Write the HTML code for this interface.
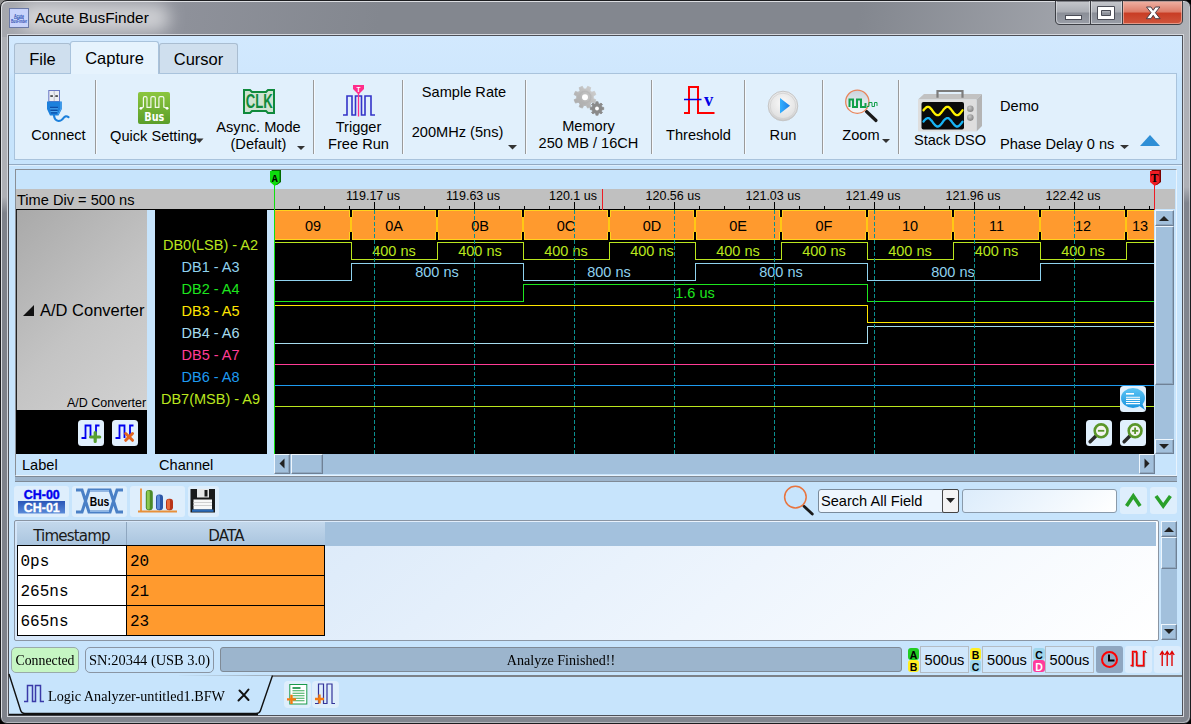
<!DOCTYPE html>
<html><head><meta charset="utf-8"><title>Acute BusFinder</title>
<style>
*{box-sizing:border-box;margin:0;padding:0}
html,body{width:1191px;height:724px;overflow:hidden;background:linear-gradient(135deg,#8c8c8c 0,#8c8c8c 3%,#000 6%,#000 100%)}
body{position:relative;font-family:"Liberation Sans",sans-serif;font-size:15px;color:#000}
.a{position:absolute}
.t{position:absolute;white-space:nowrap;line-height:1}
.c{text-align:center}
#frame{left:0;top:0;width:1191px;height:724px;border:1px solid #1c1d20;border-radius:7px 7px 7px 7px;
 background:linear-gradient(100deg,#a6a8ae 0,#8f929b 14%,#83878f 32%,#83878f 72%,#a4a7ae 92%,#aeb1b7 100%) 0 0/100% 36px no-repeat,
 linear-gradient(#aeb0b6 0,#aeb0b6 160px,#7e828b 176px,#7e828b 100%) 0 36px/9px 100% no-repeat,
 linear-gradient(#aeb0b6 0,#aeb0b6 150px,#80848d 166px,#80848d 100%) 100% 36px/9px 100% no-repeat,
 #82868f;box-shadow:inset 1px 1px 0 0 #dcdee2, inset -1px -1px 0 0 rgba(220,222,226,.55)}
#client{left:8px;top:35px;width:1175px;height:681px;background:linear-gradient(#d2e9fe 0,#cfe7fd 36px,#c7e4fc 44px,#c7e4fc 100%);border:1px solid #4d5058;box-shadow:0 0 0 1px #d4d7dd}
.sep{position:absolute;width:1px;top:80px;height:74px;background:#9a9a9a;box-shadow:1px 0 0 #f4f9fe}
.tab{position:absolute;border:1px solid #a9bdd1;border-bottom:none;border-radius:3px 3px 0 0;background:#cfdfee;font-size:16.5px;text-align:center}
.rl{position:absolute;white-space:nowrap;line-height:1;font-size:14.6px;text-align:center;transform:translateX(-50%)}
.chl{position:absolute;white-space:nowrap;line-height:1;font-size:14.5px;text-align:center;left:154px;width:113px}
.wt{font-family:"Liberation Sans",sans-serif;font-size:15px}
</style></head><body>
<div id="frame" class="a"></div>
<!-- title glow + text -->
<div class="a" style="left:20px;top:4px;width:150px;height:28px;border-radius:14px;background:#fff;opacity:.55;filter:blur(8px)"></div>
<div class="a" style="left:9px;top:8px;width:20px;height:20px;background:#c8d3fb;border:1px solid #6a79a6"></div>
<svg class="a" style="left:9px;top:8px" width="20" height="20"><text x="10" y="9.500" font-size="5" font-weight="bold" fill="#2a4fb0" text-anchor="middle" textLength="10" lengthAdjust="spacingAndGlyphs" font-family="Liberation Sans, sans-serif">Acute</text><text x="10" y="15" font-size="5" font-weight="bold" fill="#2a4fb0" text-anchor="middle" textLength="16" lengthAdjust="spacingAndGlyphs" font-family="Liberation Sans, sans-serif">BusFinder</text><path d="M5 10.500H15" stroke="#2a4fb0" stroke-width=".6"/></svg>
<div class="t" style="left:35px;top:10px;font-size:15.4px">Acute BusFinder</div>
<!-- window buttons -->
<div id="wbtn" class="a" style="left:1055px;top:1px;width:118px;height:22px"></div>

<div id="client" class="a"></div>

<!-- TABS -->
<div class="tab" style="left:14px;top:43px;width:57px;height:31px;padding-top:6px">File</div>
<div class="tab" style="left:159px;top:43px;width:79px;height:31px;padding-top:6px">Cursor</div>
<div class="a" style="left:14px;top:73px;width:1163px;height:87px;background:#e1f0fc;border:1px solid #a9c3dc"></div>
<div class="tab" style="left:70px;top:41px;width:89px;height:33px;padding-top:7px;background:#e6f3fd;border-color:#a9c3dc">Capture</div>

<div class="a" style="left:9px;top:164px;width:1173px;height:2px;background:#93aac2;border-bottom:1px solid #deeffd"></div>
<!-- RIBBON -->
<div id="ribbon">
<div class="sep" style="left:95px"></div>
<div class="sep" style="left:313px"></div>
<div class="sep" style="left:402px"></div>
<div class="sep" style="left:525px"></div>
<div class="sep" style="left:651px"></div>
<div class="sep" style="left:744px"></div>
<div class="sep" style="left:822px"></div>
<div class="sep" style="left:898px"></div>
<div class="rl" style="left:58.5px;top:127.6px">Connect</div>
<div class="rl" style="left:153.5px;top:128.6px">Quick Setting</div>
<div class="rl" style="left:258.5px;top:118.8px;line-height:17px">Async. Mode<br>(Default)</div>
<div class="rl" style="left:358.5px;top:118.8px;line-height:17px">Trigger<br>Free Run</div>
<div class="rl" style="left:464px;top:84.5px">Sample Rate</div>
<div class="rl" style="left:457.5px;top:124.6px">200MHz (5ns)</div>
<div class="rl" style="left:588.5px;top:117.8px;line-height:17px">Memory<br>250 MB / 16CH</div>
<div class="rl" style="left:698.5px;top:128.4px">Threshold</div>
<div class="rl" style="left:783px;top:128.4px">Run</div>
<div class="rl" style="left:861px;top:128.4px">Zoom</div>
<div class="rl" style="left:950px;top:132.5px">Stack DSO</div>
<div class="t" style="left:1000px;top:98.600px;font-size:14.6px">Demo</div>
<div class="t" style="left:1000px;top:136.700px;font-size:14.6px">Phase Delay 0 ns</div>
<svg class="a" style="left:0;top:0" width="1191" height="170" id="ribsvg">
<g fill="#333">
<path d="M195.500 138.500h8l-4 4.500z"/><path d="M297 146h8l-4 4z"/><path d="M508 145h9l-4.5 4.500z"/><path d="M882 139h8l-4 4z"/><path d="M1120 145h9l-4.500 4z"/>
</g>
<path d="M1140 146L1150 135L1160 146z" fill="#2f8fd6"/>
</svg>
</div>

<!-- WAVE PANEL -->
<div id="wave">
<div class="a" style="left:15px;top:169px;width:1162px;height:307px;border:1px solid #8a8f96;border-right-color:#e8f3fd;border-bottom-color:#e8f3fd"></div>
<div class="a" style="left:16px;top:189px;width:1159px;height:20px;background:#c0c0c0"></div>
<div class="t" style="left:17px;top:193px;font-size:14.600px">Time Div = 500 ns</div>
<div class="a" style="left:16px;top:209px;width:131px;height:201px;background:linear-gradient(135deg,#a9a9a9,#c4c4c4 55%,#d2d2d2);border-left:1px solid #222"></div>
<div class="a" style="left:16px;top:209px;width:1139px;height:1px;background:#000"></div>
<div class="a" style="left:16px;top:410px;width:131px;height:44px;background:#000"></div>
<div class="a" style="left:155px;top:209px;width:112px;height:245px;background:#000"></div>
<div class="a" style="left:274px;top:209px;width:880px;height:245px;background:#000"></div>
<div class="a" style="left:23px;top:305px;width:0;height:0;border-bottom:11px solid #111;border-left:11px solid transparent"></div><div class="t" style="left:40px;top:302px;font-size:16.500px">A/D Converter</div>
<div class="t" style="left:67px;top:397px;font-size:12.5px">A/D Converter</div>
<div class="chl" style="top:238px;color:#bae61e">DB0(LSB) - A2</div>
<div class="chl" style="top:260px;color:#8fd2ee">DB1 - A3</div>
<div class="chl" style="top:282px;color:#1ee61e">DB2 - A4</div>
<div class="chl" style="top:304px;color:#ffe600">DB3 - A5</div>
<div class="chl" style="top:326px;color:#a6dcee">DB4 - A6</div>
<div class="chl" style="top:348px;color:#ff3c96">DB5 - A7</div>
<div class="chl" style="top:370px;color:#1e9bf0">DB6 - A8</div>
<div class="chl" style="top:392px;color:#bae61e">DB7(MSB) - A9</div>
<div class="t" style="left:22px;top:458px;font-size:14.600px">Label</div>
<div class="t" style="left:159px;top:458px;font-size:14.600px">Channel</div>
<svg class="a" style="left:0;top:165px" width="1191" height="320" viewBox="0 165 1191 320" shape-rendering="crispEdges" font-family="Liberation Sans, sans-serif" font-size="14.500">
<path d="M299.5 206V209M324.5 206V209M349.5 206V209M374.5 202V209M399.5 206V209M424.5 206V209M449.5 206V209M474.5 202V209M499.5 206V209M524.5 206V209M549.5 206V209M574.5 202V209M599.5 206V209M624.5 206V209M649.5 206V209M674.5 202V209M699.5 206V209M724.5 206V209M749.5 206V209M774.5 202V209M799.5 206V209M824.5 206V209M849.5 206V209M874.5 202V209M899.5 206V209M924.5 206V209M949.5 206V209M974.5 202V209M999.5 206V209M1024.5 206V209M1049.5 206V209M1074.5 202V209M1099.5 206V209M1124.5 206V209M1149.5 206V209" stroke="#000" stroke-width="1" fill="none"/>
<text x="373" y="200.400" font-size="12.500" text-anchor="middle" fill="#000">119.17 us</text>
<text x="473" y="200.400" font-size="12.500" text-anchor="middle" fill="#000">119.63 us</text>
<text x="573" y="200.400" font-size="12.500" text-anchor="middle" fill="#000">120.1 us</text>
<text x="673" y="200.400" font-size="12.500" text-anchor="middle" fill="#000">120.56 us</text>
<text x="773" y="200.400" font-size="12.500" text-anchor="middle" fill="#000">121.03 us</text>
<text x="873" y="200.400" font-size="12.500" text-anchor="middle" fill="#000">121.49 us</text>
<text x="973" y="200.400" font-size="12.500" text-anchor="middle" fill="#000">121.96 us</text>
<text x="1073" y="200.400" font-size="12.500" text-anchor="middle" fill="#000">122.42 us</text>
<rect x="275" y="210" width="879" height="30" fill="#ff9a2e"/>
<path d="M275 210.5H1154M275 239.5H1154" stroke="#ffd21e" stroke-width="1"/>
<rect x="349" y="210" width="4" height="7" fill="#ffd21e"/><rect x="349" y="232" width="4" height="8" fill="#ffd21e"/><rect x="350" y="217" width="2" height="15" fill="#ffc814"/><rect x="350" y="210" width="2" height="7" fill="#000"/><rect x="350" y="232" width="2" height="8" fill="#000"/>
<rect x="435" y="210" width="4" height="7" fill="#ffd21e"/><rect x="435" y="232" width="4" height="8" fill="#ffd21e"/><rect x="436" y="217" width="2" height="15" fill="#ffc814"/><rect x="436" y="210" width="2" height="7" fill="#000"/><rect x="436" y="232" width="2" height="8" fill="#000"/>
<rect x="521" y="210" width="4" height="7" fill="#ffd21e"/><rect x="521" y="232" width="4" height="8" fill="#ffd21e"/><rect x="522" y="217" width="2" height="15" fill="#ffc814"/><rect x="522" y="210" width="2" height="7" fill="#000"/><rect x="522" y="232" width="2" height="8" fill="#000"/>
<rect x="607" y="210" width="4" height="7" fill="#ffd21e"/><rect x="607" y="232" width="4" height="8" fill="#ffd21e"/><rect x="608" y="217" width="2" height="15" fill="#ffc814"/><rect x="608" y="210" width="2" height="7" fill="#000"/><rect x="608" y="232" width="2" height="8" fill="#000"/>
<rect x="693" y="210" width="4" height="7" fill="#ffd21e"/><rect x="693" y="232" width="4" height="8" fill="#ffd21e"/><rect x="694" y="217" width="2" height="15" fill="#ffc814"/><rect x="694" y="210" width="2" height="7" fill="#000"/><rect x="694" y="232" width="2" height="8" fill="#000"/>
<rect x="779" y="210" width="4" height="7" fill="#ffd21e"/><rect x="779" y="232" width="4" height="8" fill="#ffd21e"/><rect x="780" y="217" width="2" height="15" fill="#ffc814"/><rect x="780" y="210" width="2" height="7" fill="#000"/><rect x="780" y="232" width="2" height="8" fill="#000"/>
<rect x="865" y="210" width="4" height="7" fill="#ffd21e"/><rect x="865" y="232" width="4" height="8" fill="#ffd21e"/><rect x="866" y="217" width="2" height="15" fill="#ffc814"/><rect x="866" y="210" width="2" height="7" fill="#000"/><rect x="866" y="232" width="2" height="8" fill="#000"/>
<rect x="951" y="210" width="4" height="7" fill="#ffd21e"/><rect x="951" y="232" width="4" height="8" fill="#ffd21e"/><rect x="952" y="217" width="2" height="15" fill="#ffc814"/><rect x="952" y="210" width="2" height="7" fill="#000"/><rect x="952" y="232" width="2" height="8" fill="#000"/>
<rect x="1038" y="210" width="4" height="7" fill="#ffd21e"/><rect x="1038" y="232" width="4" height="8" fill="#ffd21e"/><rect x="1039" y="217" width="2" height="15" fill="#ffc814"/><rect x="1039" y="210" width="2" height="7" fill="#000"/><rect x="1039" y="232" width="2" height="8" fill="#000"/>
<rect x="1124" y="210" width="4" height="7" fill="#ffd21e"/><rect x="1124" y="232" width="4" height="8" fill="#ffd21e"/><rect x="1125" y="217" width="2" height="15" fill="#ffc814"/><rect x="1125" y="210" width="2" height="7" fill="#000"/><rect x="1125" y="232" width="2" height="8" fill="#000"/>
<text x="313.0" y="231" text-anchor="middle" fill="#000">09</text>
<text x="394.0" y="231" text-anchor="middle" fill="#000">0A</text>
<text x="480.0" y="231" text-anchor="middle" fill="#000">0B</text>
<text x="566.0" y="231" text-anchor="middle" fill="#000">0C</text>
<text x="652.0" y="231" text-anchor="middle" fill="#000">0D</text>
<text x="738.0" y="231" text-anchor="middle" fill="#000">0E</text>
<text x="824.0" y="231" text-anchor="middle" fill="#000">0F</text>
<text x="910.0" y="231" text-anchor="middle" fill="#000">10</text>
<text x="996.5" y="231" text-anchor="middle" fill="#000">11</text>
<text x="1083.0" y="231" text-anchor="middle" fill="#000">12</text>
<text x="1140.0" y="231" text-anchor="middle" fill="#000">13</text>
<path d="M275 242.5H351.5V259.5H437.5V242.5H523.5V259.5H609.5V242.5H695.5V259.5H781.5V242.5H867.5V259.5H953.5V242.5H1040.5V259.5H1126.5V242.5H1154" stroke="#bae61e" stroke-width="1" fill="none"/>
<path d="M275 280.5H351.5V263.5H437.5H523.5V280.5H609.5H695.5V263.5H781.5H867.5V280.5H953.5H1040.5V263.5H1126.5H1154" stroke="#8fd2ee" stroke-width="1" fill="none"/>
<path d="M275 301.5H351.5H437.5H523.5V284.5H609.5H695.5H781.5H867.5V301.5H953.5H1040.5H1126.5H1154" stroke="#1ee61e" stroke-width="1" fill="none"/>
<path d="M275 305.5H351.5H437.5H523.5H609.5H695.5H781.5H867.5V322.5H953.5H1040.5H1126.5H1154" stroke="#ffe600" stroke-width="1" fill="none"/>
<path d="M275 343.5H351.5H437.5H523.5H609.5H695.5H781.5H867.5V326.5H953.5H1040.5H1126.5H1154" stroke="#a6dcee" stroke-width="1" fill="none"/>
<path d="M275 364.5H351.5H437.5H523.5H609.5H695.5H781.5H867.5H953.5H1040.5H1126.5H1154" stroke="#ff3c96" stroke-width="1" fill="none"/>
<path d="M275 385.5H351.5H437.5H523.5H609.5H695.5H781.5H867.5H953.5H1040.5H1126.5H1154" stroke="#1e9bf0" stroke-width="1" fill="none"/>
<path d="M275 406.5H351.5H437.5H523.5H609.5H695.5H781.5H867.5H953.5H1040.5H1126.5H1154" stroke="#bae61e" stroke-width="1" fill="none"/>
<text x="394.0" y="256" text-anchor="middle" fill="#bae61e">400 ns</text>
<text x="480.0" y="256" text-anchor="middle" fill="#bae61e">400 ns</text>
<text x="566.0" y="256" text-anchor="middle" fill="#bae61e">400 ns</text>
<text x="652.0" y="256" text-anchor="middle" fill="#bae61e">400 ns</text>
<text x="738.0" y="256" text-anchor="middle" fill="#bae61e">400 ns</text>
<text x="824.0" y="256" text-anchor="middle" fill="#bae61e">400 ns</text>
<text x="910.0" y="256" text-anchor="middle" fill="#bae61e">400 ns</text>
<text x="996.5" y="256" text-anchor="middle" fill="#bae61e">400 ns</text>
<text x="1083.0" y="256" text-anchor="middle" fill="#bae61e">400 ns</text>
<text x="437" y="277" text-anchor="middle" fill="#8fd2ee">800 ns</text>
<text x="609" y="277" text-anchor="middle" fill="#8fd2ee">800 ns</text>
<text x="781" y="277" text-anchor="middle" fill="#8fd2ee">800 ns</text>
<text x="953" y="277" text-anchor="middle" fill="#8fd2ee">800 ns</text>
<text x="695" y="298" text-anchor="middle" fill="#1ee61e">1.6 us</text>
<path d="M374.5 210V454M474.5 210V454M574.5 210V454M674.5 210V454M774.5 210V454M874.5 210V454M974.5 210V454M1074.5 210V454" stroke="#0a9090" stroke-width="1" stroke-dasharray="4 2" fill="none"/>
<path d="M274.5 183V454" stroke="#10e010" stroke-width="1"/>
<path d="M271.500 170H281V182L277 185H274Z" fill="#006a00" shape-rendering="auto"/>
<path d="M270 171H279.500V182L274.800 186L270 182Z" fill="#0ddc0d" shape-rendering="auto"/>
<text x="274.800" y="181.500" font-size="10" font-weight="bold" text-anchor="middle" font-family="Liberation Mono, monospace" shape-rendering="auto">A</text>
<path d="M1154.5 184V210" stroke="#ee1c24" stroke-width="1"/>
<path d="M1151.500 170H1161V182L1157 185H1154Z" fill="#7a0000" shape-rendering="auto"/>
<path d="M1150 171H1159.500V182L1154.800 186L1150 182Z" fill="#ee1c24" shape-rendering="auto"/>
<text x="1154.700" y="182" font-size="11.500" font-weight="bold" text-anchor="middle" font-family="Liberation Serif, serif">T</text>
<path d="M602.5 189V210" stroke="#ee1c24" stroke-width="1"/>
</svg>
<div class="a" style="left:1155px;top:210px;width:19px;height:244px;background:#a2c0dc"></div>
<div class="a" style="left:1155px;top:210px;width:19px;height:16px;background:#a2c0dc;border:1px solid;border-color:#eef6fd #6f8196 #6f8196 #eef6fd;box-shadow:inset -1px -1px 0 #90a8c0"></div>
<div class="a" style="left:1155px;top:226px;width:19px;height:159px;background:#a2c0dc;border:1px solid;border-color:#eef6fd #6f8196 #6f8196 #eef6fd;box-shadow:inset -1px -1px 0 #90a8c0"></div>
<div class="a" style="left:1155px;top:439px;width:19px;height:15px;background:#a2c0dc;border:1px solid;border-color:#eef6fd #6f8196 #6f8196 #eef6fd;box-shadow:inset -1px -1px 0 #90a8c0"></div>
<div class="a" style="left:274px;top:454px;width:880px;height:20px;background:#a2c0dc"></div>
<div class="a" style="left:274px;top:454px;width:16px;height:20px;background:#a2c0dc;border:1px solid;border-color:#eef6fd #6f8196 #6f8196 #eef6fd;box-shadow:inset -1px -1px 0 #90a8c0"></div>
<div class="a" style="left:291px;top:454px;width:32px;height:20px;background:#a2c0dc;border:1px solid;border-color:#eef6fd #6f8196 #6f8196 #eef6fd;box-shadow:inset -1px -1px 0 #90a8c0"></div>
<div class="a" style="left:1139px;top:454px;width:16px;height:20px;background:#a2c0dc;border:1px solid;border-color:#eef6fd #6f8196 #6f8196 #eef6fd;box-shadow:inset -1px -1px 0 #90a8c0"></div>
<svg class="a" style="left:0;top:200px" width="1191" height="280" viewBox="0 200 1191 280"><g fill="#222"><path d="M1159 221h10l-5-5z"/><path d="M1159 444h10l-5 5z"/><path d="M284.500 458.500v10l-5-5z"/><path d="M1144.500 458.500v10l5-5z"/></g></svg>
<div class="a" style="left:15px;top:476px;width:1162px;height:6px;background:#9db4cb;border-top:1px solid #7f8a96;border-bottom:1px solid #7f8a96"></div>
</div>

<!-- BOTTOM -->
<div id="bottom">
<div class="a" style="left:14px;top:486px;width:55px;height:31px;background:#deeefc;border-radius:3px"></div>
<div class="a" style="left:72px;top:486px;width:55px;height:31px;background:#deeefc;border-radius:3px"></div>
<div class="a" style="left:130px;top:486px;width:55px;height:31px;background:#deeefc;border-radius:3px"></div>
<div class="a" style="left:188px;top:486px;width:31px;height:31px;background:#deeefc;border-radius:3px"></div>
<div id="tbicons"></div>
<div class="a" style="left:818px;top:489px;width:141px;height:24px;background:#eef6fe;border:1px solid #7a8a9a;border-radius:3px"></div>
<div class="t" style="left:821px;top:493.600px;font-size:14.600px">Search All Field</div>
<div class="a" style="left:942px;top:489px;width:17px;height:24px;background:#f4f4f4;border:1px solid #444;border-radius:2px"></div>
<svg class="a" style="left:945px;top:497px" width="11" height="8"><path d="M1 1h9l-4.500 5z" fill="#222"/></svg>
<div class="a" style="left:962px;top:489px;width:155px;height:24px;background:linear-gradient(135deg,#dcecfb,#fff);border:1px solid #8a9aaa;border-radius:3px"></div>
<div class="a" style="left:1120px;top:487px;width:27px;height:27px;background:#deeefc;border-radius:3px"></div>
<div class="a" style="left:1150px;top:487px;width:27px;height:27px;background:#deeefc;border-radius:3px"></div>
<svg class="a" style="left:1120px;top:487px" width="60" height="27"><path d="M6.500 19L13.300 9L20.100 19" fill="none" stroke="#2aa02a" stroke-width="3.600" stroke-linejoin="miter"/><path d="M36 9L43.200 19L50.400 9" fill="none" stroke="#2aa02a" stroke-width="3.600"/></svg>
<div class="a" style="left:14px;top:520px;width:1145px;height:121px;background:linear-gradient(140deg,#d3e5f9 0%,#dfecfa 30%,#eef5fd 62%,#ffffff 100%);border:1px solid #8a95a3;border-radius:2px"></div>
<div class="a" style="left:17px;top:522px;width:1139px;height:24px;background:#a3c1dd"></div>
<div class="a" style="left:17px;top:522px;width:308px;height:24px;background:linear-gradient(#c3d8ec,#a9c4de)"></div>
<div class="a" style="left:126px;top:522px;width:1px;height:24px;background:#8ea6bf"></div>
<div class="t c" style="left:17px;top:529px;width:109px;font-size:15.100px;font-family:'DejaVu Sans','Liberation Sans',sans-serif;letter-spacing:-.85px;color:#1a1a1a">Timestamp</div>
<div class="t c" style="left:127px;top:529px;width:198px;font-size:15.100px;font-family:'DejaVu Sans','Liberation Sans',sans-serif;letter-spacing:-.85px;color:#1a1a1a">DATA</div>
<div class="a" style="left:17px;top:545px;width:308px;height:91px;background:#000"></div>
<div class="a" style="left:18px;top:546px;width:108px;height:29px;background:#fff"></div>
<div class="a" style="left:127px;top:546px;width:197px;height:29px;background:#ff9a2e"></div>
<div class="t" style="left:20.500px;top:553.5px;font-family:'Liberation Mono',monospace;font-size:16px">0ps</div>
<div class="t" style="left:130px;top:553.5px;font-family:'Liberation Mono',monospace;font-size:16px">20</div>
<div class="a" style="left:18px;top:576px;width:108px;height:29px;background:#fff"></div>
<div class="a" style="left:127px;top:576px;width:197px;height:29px;background:#ff9a2e"></div>
<div class="t" style="left:20.500px;top:583.5px;font-family:'Liberation Mono',monospace;font-size:16px">265ns</div>
<div class="t" style="left:130px;top:583.5px;font-family:'Liberation Mono',monospace;font-size:16px">21</div>
<div class="a" style="left:18px;top:606px;width:108px;height:29px;background:#fff"></div>
<div class="a" style="left:127px;top:606px;width:197px;height:29px;background:#ff9a2e"></div>
<div class="t" style="left:20.500px;top:613.5px;font-family:'Liberation Mono',monospace;font-size:16px">665ns</div>
<div class="t" style="left:130px;top:613.5px;font-family:'Liberation Mono',monospace;font-size:16px">23</div>
<div class="a" style="left:1161px;top:521px;width:16px;height:119px;background:#a2c0dc"></div>
<div class="a" style="left:1161px;top:521px;width:16px;height:16px;background:#a2c0dc;border:1px solid;border-color:#eef6fd #6f8196 #6f8196 #eef6fd;box-shadow:inset -1px -1px 0 #90a8c0"></div>
<div class="a" style="left:1161px;top:537px;width:16px;height:32px;background:#a2c0dc;border:1px solid;border-color:#eef6fd #6f8196 #6f8196 #eef6fd;box-shadow:inset -1px -1px 0 #90a8c0"></div>
<div class="a" style="left:1161px;top:624px;width:16px;height:16px;background:#a2c0dc;border:1px solid;border-color:#eef6fd #6f8196 #6f8196 #eef6fd;box-shadow:inset -1px -1px 0 #90a8c0"></div>
<svg class="a" style="left:1161px;top:521px" width="16" height="120"><g fill="#222"><path d="M3 11h10l-5-5z"/><path d="M3 108h10l-5 5z"/></g></svg>
<div class="a" style="left:11px;top:647px;width:68px;height:26px;background:#c6f6c3;border:1px solid #9aa;border-radius:5px"></div>
<div class="t c" style="left:11px;top:653px;width:68px;font-size:15px;font-family:'Liberation Serif',serif;transform:scaleX(.92)">Connected</div>
<div class="a" style="left:85px;top:647px;width:129px;height:26px;background:#c7e4fc;border:1px solid #8a95a3;border-radius:5px"></div>
<div class="t c" style="left:85px;top:653px;width:129px;font-size:15px;font-family:'Liberation Serif',serif;transform:scaleX(.96)">SN:20344 (USB 3.0)</div>
<div class="a" style="left:220px;top:647px;width:682px;height:25px;background:#9cb5cd;border:1px solid #7f8a96;border-radius:3px"></div>
<div class="t c" style="left:220px;top:653px;width:682px;font-size:15px;font-family:'Liberation Serif',serif;transform:scaleX(.94)">Analyze Finished!!</div>
<div class="a" style="left:908px;top:648px;width:11px;height:12px;background:#22cc22;border-radius:3px"></div><div class="a" style="left:908px;top:660px;width:11px;height:12px;background:#ffee22;border-radius:3px"></div><div class="t c" style="left:908px;top:649.500px;width:11px;font-size:10.500px;font-weight:bold">A</div><div class="t c" style="left:908px;top:661.500px;width:11px;font-size:10.500px;font-weight:bold;color:#000">B</div>
<div class="a" style="left:970px;top:648px;width:11px;height:12px;background:#ffee22;border-radius:3px"></div><div class="a" style="left:970px;top:660px;width:11px;height:12px;background:#9fd6ec;border-radius:3px"></div><div class="t c" style="left:970px;top:649.500px;width:11px;font-size:10.500px;font-weight:bold">B</div><div class="t c" style="left:970px;top:661.500px;width:11px;font-size:10.500px;font-weight:bold;color:#000">C</div>
<div class="a" style="left:1033px;top:648px;width:12px;height:12px;background:#9fd6ec;border-radius:3px"></div><div class="a" style="left:1033px;top:660px;width:12px;height:12px;background:#ff3c9c;border-radius:3px"></div><div class="t c" style="left:1033px;top:649.500px;width:12px;font-size:10.500px;font-weight:bold">C</div><div class="t c" style="left:1033px;top:661.500px;width:12px;font-size:10.500px;font-weight:bold;color:#fff">D</div>
<div class="a" style="left:920px;top:646px;width:49px;height:27px;background:#d0e7fb;border:1px solid #b4bcc4"></div>
<div class="t c" style="left:920px;top:652.500px;width:49px;font-size:14.600px">500us</div>
<div class="a" style="left:982px;top:646px;width:50px;height:27px;background:#d0e7fb;border:1px solid #b4bcc4"></div>
<div class="t c" style="left:982px;top:652.500px;width:50px;font-size:14.600px">500us</div>
<div class="a" style="left:1045px;top:646px;width:49px;height:27px;background:#d0e7fb;border:1px solid #b4bcc4"></div>
<div class="t c" style="left:1045px;top:652.500px;width:49px;font-size:14.600px">500us</div>
<div class="a" style="left:1096px;top:646px;width:27px;height:27px;background:#8fa6c0;border-radius:3px"></div>
<div class="a" style="left:1125px;top:646px;width:27px;height:27px;background:#dbecfc;border-radius:3px"></div>
<div class="a" style="left:1154px;top:646px;width:27px;height:27px;background:#dbecfc;border-radius:3px"></div>
<div id="sticons"></div>
<div class="a" style="left:9px;top:674.500px;width:1173px;height:2px;background:#7d8288"></div>
<svg class="a" style="left:0;top:670px" width="400" height="50" viewBox="0 670 400 50"><path d="M9 674L20.500 710Q21.500 713.500 25 713.500H256Q259.500 713.500 260.500 710.500L272.500 675.500" fill="#c7e4fc" stroke="#111" stroke-width="1.400"/><path d="M9 714.500H258" stroke="#111" stroke-width="1.500"/></svg>
<div class="t" style="left:48px;top:688px;font-size:15.500px;font-family:'Liberation Serif',serif;transform:scaleX(.915);transform-origin:left center">Logic Analyzer-untitled1.BFW</div>
<div id="boticons"></div>
</div>
<div id="icons"><svg class="a" style="left:0;top:0" width="1191" height="724" viewBox="0 0 1191 724" font-family="Liberation Sans, sans-serif">
<defs>
<linearGradient id="gG" x1="0" y1="0" x2="0" y2="1"><stop offset="0" stop-color="#8cc63f"/><stop offset="1" stop-color="#5a9e2a"/></linearGradient>
<linearGradient id="gB" x1="0" y1="0" x2="0" y2="1"><stop offset="0" stop-color="#3aa0f0"/><stop offset="1" stop-color="#1a6fd0"/></linearGradient>
<radialGradient id="gR" cx=".5" cy=".4" r=".6"><stop offset="0" stop-color="#fafafa"/><stop offset=".8" stop-color="#e2e2e2"/><stop offset="1" stop-color="#c4c4c4"/></radialGradient>
<linearGradient id="gP" x1="0" y1="0" x2="1" y2="0"><stop offset="0" stop-color="#34b0ff"/><stop offset="1" stop-color="#1c7ee6"/></linearGradient>
<linearGradient id="gS" x1="0" y1="0" x2="1" y2="0"><stop offset="0" stop-color="#9a9a9a"/><stop offset=".5" stop-color="#f0f0f0"/><stop offset="1" stop-color="#a8a8a8"/></linearGradient>
<linearGradient id="gL" x1="0" y1="0" x2="0" y2="1"><stop offset="0" stop-color="#c9d3dc"/><stop offset="1" stop-color="#f4f8fb"/></linearGradient>
<linearGradient id="gC" x1="0" y1="0" x2="0" y2="1"><stop offset="0" stop-color="#5cc4f4"/><stop offset="1" stop-color="#1c96e0"/></linearGradient>
<radialGradient id="gK" cx=".4" cy=".35" r=".7"><stop offset="0" stop-color="#c8c8c8"/><stop offset="1" stop-color="#808080"/></radialGradient>
<linearGradient id="gCH" x1="0" y1="0" x2="0" y2="1"><stop offset="0" stop-color="#2a56b8"/><stop offset="1" stop-color="#5a8ad8"/></linearGradient>
<linearGradient id="gX" x1="0" y1="0" x2="0" y2="1"><stop offset="0" stop-color="#f08a1e"/><stop offset="1" stop-color="#d83c1e"/></linearGradient>
<linearGradient id="gMin" x1="0" y1="0" x2="0" y2="1"><stop offset="0" stop-color="#c6c8cd"/><stop offset=".48" stop-color="#a9acb3"/><stop offset=".5" stop-color="#8a8e97"/><stop offset="1" stop-color="#9a9ea7"/></linearGradient>
<linearGradient id="gCl" x1="0" y1="0" x2="0" y2="1"><stop offset="0" stop-color="#eeb0a2"/><stop offset=".48" stop-color="#dc7a66"/><stop offset=".5" stop-color="#c83c24"/><stop offset="1" stop-color="#d0553c"/></linearGradient>
</defs>
<path d="M1055.500 1V20Q1055.500 24.500 1060 24.500H1178Q1182.500 24.500 1182.500 20V1Z" fill="url(#gMin)" stroke="#3c3e44" stroke-width="1"/>
<path d="M1123 1.500V24H1178Q1182 24 1182 20V1.500Z" fill="url(#gCl)"/>
<path d="M1090.500 1V24.500M1122.500 1V24.500" stroke="#3c3e44" stroke-width="1"/>
<path d="M1056.500 1V20Q1056.500 23.500 1060 23.500H1089.500V1M1091.500 1V23.500H1121.500V1" fill="none" stroke="#e4e6ea" stroke-opacity=".6" stroke-width="1"/>
<path d="M1123.500 1V23.500H1178Q1181.500 23.500 1181.500 20V1" fill="none" stroke="#f4c4b8" stroke-opacity=".6" stroke-width="1"/>
<rect x="1065.500" y="15.500" width="16" height="4" fill="#fff" stroke="#4a4c56" stroke-width="1"/>
<path d="M1097.500 6.500h17v13h-17zM1101.500 10.500v5h9v-5z" fill="#fff" fill-rule="evenodd" stroke="#4a4c56" stroke-width="1"/>
<path d="M1146.500 7h4.500l2.200 3.300l2.200-3.300h4.500l-4.500 5.700l4.700 6h-4.700l-2.200-3.400l-2.200 3.400h-4.700l4.700-6z" fill="#fff" stroke="#4a3c44" stroke-width="1"/>
<rect x="48.800" y="90.500" width="10.700" height="11" fill="#ececf2" stroke="#6a78c4" stroke-width="1"/>
<rect x="50.300" y="95.300" width="2.600" height="1.500" fill="#2a2a2a"/><rect x="55.300" y="95.300" width="2.600" height="1.500" fill="#2a2a2a"/><path d="M54.200 91v3l.8 1.500l-.8 1.500v4" stroke="#9a9aa8" stroke-width=".6" fill="none"/>
<path d="M47 101.500H61.800V109L58.500 115.500H50L47 109Z" fill="#1c80dc"/>
<path d="M60.800 102V109L58 114.500" stroke="#4aa4f0" stroke-width="1" fill="none"/>
<path d="M50 107.500H58M50.500 110.200H57.500M51 112.900H57" stroke="#0c4ea8" stroke-width="1.400"/>
<path d="M50 108.800H58M50.500 111.500H57.500" stroke="#5ab0f4" stroke-width=".8"/>
<path d="M54 115.500Q54.500 120.500 58.500 121Q61.500 121 63.500 118Q65.500 115 68.500 117.200" fill="none" stroke="#1c80dc" stroke-width="2.200" stroke-linecap="round"/>
<rect x="138" y="92" width="32" height="32" rx="2" fill="url(#gG)"/>
<path d="M141 108.200L143.400 107V98Q143.400 96.600 144.800 96.600H145.600Q147 96.600 147 98V107.300H150.900V98Q150.900 96.600 152.300 96.600H153.900Q155.300 96.600 155.300 98V107.300H158.900V98Q158.900 96.600 160.300 96.600H162.400Q163.800 96.600 163.800 98V107L167 108.200" fill="none" stroke="#fff" stroke-opacity=".9" stroke-width="1.200"/>
<circle cx="140.900" cy="108.300" r="1.400" fill="#fff"/><circle cx="167.100" cy="108.300" r="1.400" fill="#fff"/>
<text x="154.300" y="121" font-size="12.500" font-weight="bold" fill="#fff" text-anchor="middle" font-family="DejaVu Sans, Liberation Sans, sans-serif" textLength="20" lengthAdjust="spacingAndGlyphs">Bus</text>
<path d="M244 90H250L252 92H266L268 90H274V113H268L266 111H252L250 113H244Z" fill="#cfe3d2" stroke="#0f8a3c" stroke-width="2" stroke-linejoin="miter"/>
<text x="259.300" y="107.600" font-size="19.500" font-weight="bold" fill="#0f8a3c" text-anchor="middle" textLength="27" lengthAdjust="spacingAndGlyphs">CLK</text>
<path d="M343 115H347V96H352V115H355.500V96H361.500V115H365V96H371V115H375" fill="none" stroke="#3434c8" stroke-width="1.600"/>
<path d="M353 85H364V89L358.500 94.500L353 89Z" fill="#ff2d8a"/>
<path d="M358.500 93V116.500" stroke="#ff2d8a" stroke-width="1.300"/>
<text x="358.500" y="91.500" font-size="6.500" font-weight="bold" fill="#fff" text-anchor="middle">T</text>
<linearGradient id="gGear" x1="0" y1="1" x2="1" y2="0"><stop offset="0" stop-color="#a6a6a6"/><stop offset="1" stop-color="#d2d2d2"/></linearGradient>
<path d="M593.3 98.5L595.9 99.8L594.6 103.0L591.8 102.1L590.0 104.0L590.9 106.7L587.6 108.1L586.3 105.5L583.7 105.5L582.4 108.1L579.2 106.8L580.1 104.0L578.2 102.2L575.5 103.1L574.1 99.8L576.7 98.5L576.7 95.9L574.1 94.6L575.4 91.4L578.2 92.3L580.0 90.4L579.1 87.7L582.4 86.3L583.7 88.9L586.3 88.9L587.6 86.3L590.8 87.6L589.9 90.4L591.8 92.2L594.5 91.3L595.9 94.6L593.3 95.9Z" fill="url(#gGear)" stroke="url(#gGear)" stroke-width=".8" stroke-linejoin="round"/><circle cx="585" cy="97.2" r="3.0" fill="#fff"/>
<circle cx="585" cy="97.200" r="5.800" fill="none" stroke="#b0b0b0" stroke-opacity=".6" stroke-width="1.600"/>
<path d="M602.1 107.3L603.7 107.4L603.7 109.6L602.1 109.7L601.4 111.2L602.5 112.5L601.0 114.0L599.7 112.9L598.2 113.6L598.1 115.2L595.9 115.2L595.8 113.6L594.3 112.9L593.0 114.0L591.5 112.5L592.6 111.2L591.9 109.7L590.3 109.6L590.3 107.4L591.9 107.3L592.6 105.8L591.5 104.5L593.0 103.0L594.3 104.1L595.8 103.4L595.9 101.8L598.1 101.8L598.2 103.4L599.7 104.1L601.0 103.0L602.5 104.5L601.4 105.8Z" fill="#8a8a8a" stroke="#8a8a8a" stroke-width=".8" stroke-linejoin="round"/><circle cx="597" cy="108.5" r="1.9" fill="#fff"/>
<path d="M684 113H689V87H698V113H714.500" fill="none" stroke="#f00" stroke-width="2"/>
<path d="M684 99.500H701.500" stroke="#0000e6" stroke-width="1.500"/>
<text x="708.500" y="106" font-size="18.500" font-weight="bold" fill="#0000e6" text-anchor="middle" font-family="Liberation Serif, serif">v</text>
<circle cx="783" cy="106" r="14.800" fill="url(#gR)" stroke="#c6c6c6" stroke-width="1"/>
<circle cx="783" cy="106" r="12.800" fill="none" stroke="#d2d2d2" stroke-width=".8"/>
<path d="M780 98V113.500L790 105.700Z" fill="url(#gP)"/>
<path d="M866.500 111.500L876 120.500" stroke="#1a1a1a" stroke-width="3.200" stroke-linecap="round"/>
<circle cx="857.300" cy="101.700" r="11.600" fill="url(#gL)" stroke="#e8845a" stroke-width="1.300"/>
<path d="M849.500 107V99.500H853V107H857V99.500H861V107H865.500V103" fill="none" stroke="#12a04a" stroke-width="2"/>
<path d="M867 106.500H869V102.500H872V106.500H874.500V102.500H877V106" fill="none" stroke="#12a04a" stroke-width="1"/>
<path d="M918 99.500L924 94H982L976.500 99.500Z" fill="#c2c2c2"/><path d="M976.500 99.500L982 94V126L976.500 131.500Z" fill="#b4b4b4"/>
<rect x="918" y="99.500" width="58.500" height="32" fill="#dedede"/>
<path d="M937.500 97.800V91H962.500V97.800" fill="none" stroke="#7c7c7c" stroke-width="2.200"/>
<rect x="921.500" y="102" width="42.500" height="27.500" rx="2" fill="#0a0a0a"/>
<path d="M923.5 110.3L924.1 109.5L924.8 108.7L925.5 108.0L926.1 107.5L926.8 107.1L927.4 106.8L928.0 106.8L928.7 106.9L929.4 107.3L930.0 107.7L930.6 108.4L931.3 109.1L932.0 109.9L932.6 110.8L933.2 111.7L933.9 112.5L934.5 113.3L935.2 114.0L935.9 114.5L936.5 114.9L937.1 115.2L937.8 115.2L938.5 115.1L939.1 114.7L939.8 114.3L940.4 113.6L941.0 112.9L941.7 112.1L942.4 111.2L943.0 110.3L943.6 109.5L944.3 108.7L945.0 108.0L945.6 107.5L946.2 107.1L946.9 106.8L947.5 106.8L948.2 106.9L948.9 107.3L949.5 107.7L950.1 108.4L950.8 109.1L951.5 109.9L952.1 110.8L952.8 111.7L953.4 112.5L954.0 113.3L954.7 114.0L955.4 114.5L956.0 114.9L956.6 115.2L957.3 115.2L958.0 115.1L958.6 114.7L959.2 114.3L959.9 113.6L960.5 112.9L961.2 112.1L961.9 111.2L962.5 110.3" fill="none" stroke="#fff200" stroke-width="2.300" stroke-linecap="round"/>
<path d="M923.5 121.6L924.1 120.8L924.8 120.0L925.5 119.3L926.1 118.8L926.8 118.4L927.4 118.1L928.0 118.1L928.7 118.2L929.4 118.6L930.0 119.0L930.6 119.7L931.3 120.4L932.0 121.2L932.6 122.1L933.2 123.0L933.9 123.8L934.5 124.6L935.2 125.3L935.9 125.8L936.5 126.2L937.1 126.5L937.8 126.5L938.5 126.4L939.1 126.0L939.8 125.6L940.4 124.9L941.0 124.2L941.7 123.4L942.4 122.5L943.0 121.6L943.6 120.8L944.3 120.0L945.0 119.3L945.6 118.8L946.2 118.4L946.9 118.1L947.5 118.1L948.2 118.2L948.9 118.6L949.5 119.0L950.1 119.7L950.8 120.4L951.5 121.2L952.1 122.1L952.8 123.0L953.4 123.8L954.0 124.6L954.7 125.3L955.4 125.8L956.0 126.2L956.6 126.5L957.3 126.5L958.0 126.4L958.6 126.0L959.2 125.6L959.9 124.9L960.5 124.2L961.2 123.4L961.9 122.5L962.5 121.6" fill="none" stroke="#18b4f4" stroke-width="2.300" stroke-linecap="round"/>
<circle cx="970.300" cy="108.800" r="3.300" fill="url(#gK)"/><circle cx="970.300" cy="117.600" r="3.300" fill="url(#gK)"/>
<rect x="78" y="420" width="26" height="26" rx="3.500" fill="#e1f0fd"/>
<path d="M81.5 438H85.5V425.500H90.5V438M96 436V425.500H99.5" fill="none" stroke="#0000f0" stroke-width="1.800"/>
<rect x="112" y="420" width="26" height="26" rx="3.500" fill="#e1f0fd"/>
<path d="M115.5 438H119.5V425.500H124.5V438M130 436V425.500H133.5" fill="none" stroke="#0000f0" stroke-width="1.800"/>
<path d="M95.200 432.500V441.500M90.700 437H99.700" stroke="#58a030" stroke-width="3.200" stroke-linecap="round"/>
<path d="M125.700 433.500L132.500 440.300M132.500 433.500L125.700 440.300" stroke="#e4641e" stroke-width="3" stroke-linecap="round"/>
<rect x="1120" y="386" width="26" height="26" rx="3.500" fill="#e1f0fd"/>
<path d="M1138 405L1145 410L1141.500 402Z" fill="#1c96e0"/><ellipse cx="1133" cy="398" rx="12" ry="10" fill="url(#gC)"/>
<path d="M1126 393.800H1134" stroke="#fff" stroke-width="1.600"/><path d="M1126 397.300H1140M1126 399.400H1140M1126 401.500H1140M1126 403.600H1140" stroke="#fff" stroke-width="1.100"/>
<rect x="1086" y="420" width="26" height="26" rx="3.500" fill="#e1f0fd"/>
<path d="M1096.1 435.8L1090.1 441.8" stroke="#2a2a2a" stroke-width="3.400" stroke-linecap="round"/>
<circle cx="1101.1" cy="430.8" r="6.400" fill="#f4f4f0" stroke="#5a962a" stroke-width="2.600"/>
<path d="M1097.8999999999999 430.8H1104.3" stroke="#5a962a" stroke-width="1.800"/>
<rect x="1120" y="420" width="26" height="26" rx="3.500" fill="#e1f0fd"/>
<path d="M1130.1 435.8L1124.1 441.8" stroke="#2a2a2a" stroke-width="3.400" stroke-linecap="round"/>
<circle cx="1135.1" cy="430.8" r="6.400" fill="#f4f4f0" stroke="#5a962a" stroke-width="2.600"/>
<path d="M1131.8999999999999 430.8H1138.3" stroke="#5a962a" stroke-width="1.800"/>
<path d="M1135.1 427.6V434.0" stroke="#5a962a" stroke-width="1.800"/>
<text x="41.800" y="499" font-size="12.500" font-weight="bold" fill="#0000ee" text-anchor="middle" textLength="36" lengthAdjust="spacingAndGlyphs" stroke="#0000ee" stroke-width=".4">CH-00</text>
<rect x="18" y="501" width="47" height="12.500" fill="url(#gCH)"/>
<text x="41.800" y="512" font-size="12.500" font-weight="bold" fill="#fff" text-anchor="middle" textLength="36" lengthAdjust="spacingAndGlyphs" stroke="#fff" stroke-width=".3">CH-01</text>
<path d="M76 490H82L89 512H110L117 490H123M76 512H82L89 490H110L117 512H123" fill="none" stroke="#4a80c6" stroke-width="3" stroke-linejoin="miter"/>
<path d="M90 490.500H109M90 511.500H109" stroke="#8db6e6" stroke-width="1.200"/>
<text x="99.500" y="505.500" font-size="12.500" font-weight="bold" fill="#000" text-anchor="middle" textLength="19.500" lengthAdjust="spacingAndGlyphs">Bus</text>
<path d="M141 488.500V512M138 511.500H177" stroke="#e8903a" stroke-width="1.800" fill="none"/>
<rect x="145.8" y="490" width="7" height="20.30000000000001" rx="3" fill="#4a8a28"/><rect x="146.8" y="490.5" width="3" height="19" rx="1.500" fill="#8cc850"/>
<rect x="156" y="494.5" width="7" height="15.800000000000011" rx="3" fill="#2a56a8"/><rect x="157" y="495.0" width="3" height="14.5" rx="1.500" fill="#5a8ad8"/>
<rect x="166" y="498.8" width="7" height="11.5" rx="3" fill="#b83418"/><rect x="167" y="499.3" width="3" height="10.199999999999989" rx="1.500" fill="#e86a3c"/>
<path d="M190.500 489H215V512.500H190.500Z" fill="#1a1a1a"/>
<rect x="197" y="489" width="12" height="8.500" fill="#e8e8e8"/><rect x="204.500" y="490" width="3" height="6.500" fill="#1a1a1a"/>
<rect x="193.500" y="499.500" width="18.500" height="10" fill="#f8f8f8"/><path d="M193.500 502.500H212M193.500 505.500H212" stroke="#d0d0d0" stroke-width="1"/>
<rect x="192" y="509.500" width="21.500" height="2.300" fill="#2a6ab8"/>
<path d="M804 506.300L812.300 514" stroke="#1a1a1a" stroke-width="2.800" stroke-linecap="round"/>
<circle cx="795.400" cy="497.100" r="10.800" fill="none" stroke="#e8743e" stroke-width="1.500"/>
<circle cx="1109.500" cy="659.500" r="7.500" fill="none" stroke="#f00" stroke-width="2"/>
<path d="M1109 654.500V660.500H1114.500" fill="none" stroke="#000" stroke-width="2"/>
<path d="M1131 666H1133V652H1137V666H1144V652H1146.500" fill="none" stroke="#804040" stroke-width=".8" transform="translate(.6,.6)"/>
<path d="M1130.500 665.500H1132.500V651.500H1136.500V665.500H1143.500V651.500H1146" fill="none" stroke="#f00" stroke-width="1.450"/>
<path d="M1162.2 666V652M1160.0 655L1162.2 651.500L1164.4 655" fill="none" stroke="#e00000" stroke-width="1.350"/>
<path d="M1167.2 666V652M1165.0 655L1167.2 651.500L1169.4 655" fill="none" stroke="#e00000" stroke-width="1.350"/>
<path d="M1172 666V652M1169.8 655L1172 651.500L1174.2 655" fill="none" stroke="#e00000" stroke-width="1.350"/>
<path d="M24 701.500H27.500V685.500H32.500V701.500H35.500V685.500H40.500V701.500H44" fill="none" stroke="#3a3aa8" stroke-width="1.500"/>
<path d="M239.500 690.500Q243.500 694.500 248.500 700M248.500 689.500Q244.500 695 238.500 700.500" fill="none" stroke="#111" stroke-width="2" stroke-linecap="round"/>
<rect x="284" y="681" width="27" height="27" rx="4" fill="#deeefc"/><rect x="312" y="681" width="27" height="27" rx="4" fill="#deeefc"/>
<rect x="289.800" y="684.500" width="17" height="19.500" fill="#fff" stroke="#1a9a4a" stroke-width="1"/>
<path d="M292.500 688H300.500" stroke="#0a8a3a" stroke-width="1.600"/><path d="M292.500 690.800H304.500M292.500 693.300H304.500M292.500 695.800H304.500M292.500 698.300H304.500M292.500 700.800H304.500" stroke="#3aaa5a" stroke-width="1.100"/>
<path d="M291.500 694.800V704M287 699.400H296" stroke="#f47a10" stroke-width="2.400"/>
<path d="M315 703.500H318.500V684H323.500V703.500H327V684H332V703.500H335" fill="none" stroke="#333399" stroke-width="1.200"/>
<path d="M319.500 694.500V703.500M315 699H324" stroke="#f47a10" stroke-width="2.400"/>
</svg></div><!--/icons-->
</body></html>
